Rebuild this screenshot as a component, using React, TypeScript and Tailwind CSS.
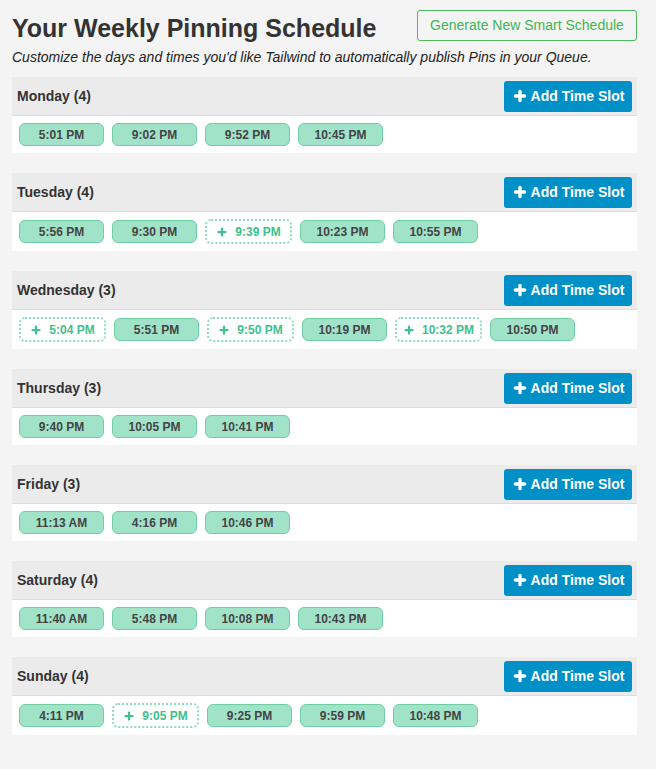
import { Plus } from "lucide-react";

type Slot = { time: string; suggested?: boolean };
type Day = { name: string; slots: Slot[] };

const days: Day[] = [
  { name: "Monday", slots: [{ time: "5:01 PM" }, { time: "9:02 PM" }, { time: "9:52 PM" }, { time: "10:45 PM" }] },
  {
    name: "Tuesday",
    slots: [{ time: "5:56 PM" }, { time: "9:30 PM" }, { time: "9:39 PM", suggested: true }, { time: "10:23 PM" }, { time: "10:55 PM" }],
  },
  {
    name: "Wednesday",
    slots: [
      { time: "5:04 PM", suggested: true },
      { time: "5:51 PM" },
      { time: "9:50 PM", suggested: true },
      { time: "10:19 PM" },
      { time: "10:32 PM", suggested: true },
      { time: "10:50 PM" },
    ],
  },
  { name: "Thursday", slots: [{ time: "9:40 PM" }, { time: "10:05 PM" }, { time: "10:41 PM" }] },
  { name: "Friday", slots: [{ time: "11:13 AM" }, { time: "4:16 PM" }, { time: "10:46 PM" }] },
  { name: "Saturday", slots: [{ time: "11:40 AM" }, { time: "5:48 PM" }, { time: "10:08 PM" }, { time: "10:43 PM" }] },
  {
    name: "Sunday",
    slots: [{ time: "4:11 PM" }, { time: "9:05 PM", suggested: true }, { time: "9:25 PM" }, { time: "9:59 PM" }, { time: "10:48 PM" }],
  },
];

function countOf(day: Day) {
  return day.slots.filter((s) => !s.suggested).length;
}

function SlotPill({ slot }: { slot: Slot }) {
  if (slot.suggested) {
    return (
      <div className="flex h-[25px] w-[87px] items-center justify-center gap-[7px] rounded-[6px] border-2 border-dotted border-[#8fdcbc] bg-white text-[12px] font-bold text-[#3fc08c]">
        <Plus size={12} strokeWidth={4.5} />
        {slot.time}
      </div>
    );
  }
  return (
    <div className="flex h-[23px] w-[85px] items-center justify-center rounded-[6px] border border-[#6fcfa2] bg-[#a1e3c9] text-[12px] font-bold text-[#444]">
      {slot.time}
    </div>
  );
}

function DayBlock({ day }: { day: Day }) {
  return (
    <section className="mb-5">
      <div className="flex h-[39px] items-center justify-between border-b border-[#dcdcdc] bg-[#ebebeb] pl-[5px] pr-[5px]">
        <span className="mt-[1px] text-[14px] font-bold text-[#333]">
          {day.name} ({countOf(day)})
        </span>
        <button
          type="button"
          className="flex h-[31px] w-[128px] items-center justify-center gap-[3px] rounded-[3px] bg-[#0090c8] text-[14px] font-bold text-white"
        >
          <Plus size={16} strokeWidth={5} />
          Add Time Slot
        </button>
      </div>
      <div className="flex items-center gap-2 bg-white py-[7px] pl-[7px]">
        {day.slots.map((s) => (
          <SlotPill key={s.time} slot={s} />
        ))}
      </div>
    </section>
  );
}

export default function App() {
  return (
    <div className="min-h-[769px] bg-[#f4f4f4] px-[12px] pt-[10px] text-[#333]" style={{ fontFamily: '"Liberation Sans", Arial, sans-serif' }}>
      <div className="w-[625px]">
        <div className="flex items-start justify-between">
          <h1 className="mt-[2px] text-[25px] font-bold leading-[32px] text-[#333]">Your Weekly Pinning Schedule</h1>
          <button
            type="button"
            className="h-[31px] w-[220px] rounded-[3px] border border-[#4cbb5e] bg-transparent text-[14px] text-[#3fb554]"
          >
            Generate New Smart Schedule
          </button>
        </div>
        <p className="mt-[4px] text-[14px] italic leading-[18px] text-[#222]">
          Customize the days and times you'd like Tailwind to automatically publish Pins in your Queue.
        </p>
        <div className="mt-[11px]">
          {days.map((d) => (
            <DayBlock key={d.name} day={d} />
          ))}
        </div>
      </div>
    </div>
  );
}
